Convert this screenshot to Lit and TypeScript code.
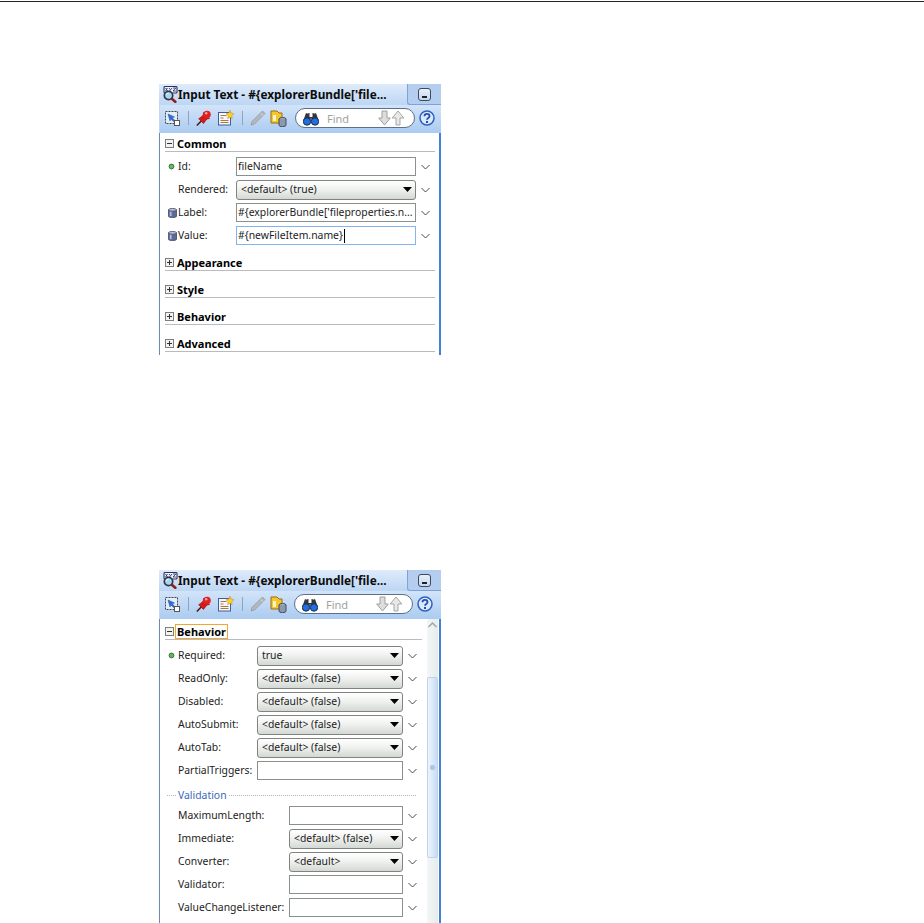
import { LitElement, html, css, svg } from "lit";
import { customElement, property } from "lit/decorators.js";

type Row = {
  label: string;
  kind: "input" | "select" | "focus";
  value?: string;
  marker?: "dot" | "db";
};

const iconTitle = svg`<svg class="i-title" width="16" height="17" viewBox="0 0 16 17">
  <rect x="2" y="0.500" width="13" height="6.500" rx="1" fill="#eef2fb" stroke="#2c3268" stroke-width="1.100"/>
  <path d="M3.500 2l2 3M5.500 2l-2 3M7 2l1.200 1.500M10 2L7.500 5M11 2h2.800l-2.800 3h2.800" stroke="#2c3268" fill="none" stroke-width=".9"/>
  <circle cx="6.500" cy="9.500" r="4.200" fill="#a6d6f0" stroke="#2e3a4c" stroke-width="1.700"/>
  <path d="M4.300 8.800a2.500 2.500 0 0 1 2.500-1.700" stroke="#fff" fill="none"/>
  <path d="M9.800 12.800l3.500 3" stroke="#8a2018" stroke-width="2.600" stroke-linecap="round"/>
</svg>`;
const iconSelect = svg`<svg width="16" height="16" viewBox="0 0 16 16">
  <rect x="1.500" y="1.500" width="12" height="12" fill="#e4ecf6" stroke="#3d4450" stroke-dasharray="2 1"/>
  <path d="M4 4l6.500 3-2.300.800 2.500 2.500-1.200 1.200-2.500-2.500L6 11z" fill="#2f6fd8" stroke="#1c4aa0" stroke-width=".5"/>
  <rect x="10.500" y="10.500" width="5" height="5" fill="#fff" stroke="#555"/>
</svg>`;
const iconPin = svg`<svg width="16" height="16" viewBox="0 0 16 16">
  <path d="M.800 15.500l5.200-5.200" stroke="#4a2018" stroke-width="1.600"/>
  <path d="M7.500 2.500l6 6-2.500.500-2.500 3-1 1.500-4.800-4.800 1.500-1 3-2.500z" fill="#d61818" stroke="#9a1010" stroke-width=".7"/>
  <circle cx="11" cy="4.500" r="3.800" fill="#e42020"/>
  <circle cx="10.200" cy="3.300" r="1.200" fill="#f8a8a8"/>
</svg>`;
const iconNote = svg`<svg width="16" height="16" viewBox="0 0 16 16">
  <rect x="0.500" y="2.500" width="12" height="12.500" fill="#f4f6fb" stroke="#3c5fa0"/>
  <path d="M2.500 5.500h6M2.500 8h3M2.500 10.500h8M2.500 12.500h8" stroke="#b07a30"/>
  <path d="M12 0l1 3 3 .700-2.300 2 .500 3L12 7.200 9.600 8.700l.600-3L8 3.700l3-.700z" fill="#f8d030" stroke="#c98a10" stroke-width=".5"/>
</svg>`;
const iconPencil = svg`<svg width="16" height="16" viewBox="0 0 16 16">
  <path d="M12.500 1l2.500 2.500L4.500 14 1 15l1-3.500z" fill="#b4b8bc" stroke="#93979b" stroke-width=".8"/>
  <path d="M11 3.500l2 2" stroke="#e4e6e8"/>
</svg>`;
const iconDoc = svg`<svg width="17" height="17" viewBox="0 0 17 17">
  <path d="M1 1h6l2 2h3v10H1z" fill="#f6c62a" stroke="#9a6d10"/>
  <rect x="3" y="5" width="3" height="6" fill="#fff6c8"/>
  <ellipse cx="12.500" cy="9" rx="3.500" ry="1.500" fill="#aab6c8" stroke="#3f4c60"/>
  <path d="M9 9v6c0 1 1.500 1.600 3.500 1.600s3.500-.600 3.500-1.600V9" fill="#8b99ae" stroke="#3f4c60"/>
</svg>`;
const iconBino = svg`<svg width="16" height="15" viewBox="0 0 16 15">
  <path d="M3 2h3.500v4H9.500V2H13l2.500 7h-7V7.500h-1V9H.500z" fill="#33363c"/>
  <circle cx="4" cy="10.500" r="3.700" fill="#1f6fe0" stroke="#1a2c50"/>
  <circle cx="12" cy="10.500" r="3.700" fill="#1f6fe0" stroke="#1a2c50"/>
  <path d="M3.500 2.500h2M10.500 2.500h2" stroke="#9aa0a8"/>
</svg>`;
const iconDown = svg`<svg width="13" height="16" viewBox="0 0 13 16"><path d="M4 1h5v7h3.300L6.500 15 .700 8H4z" fill="#dcdedc" stroke="#9da09d"/></svg>`;
const iconUp = svg`<svg width="14" height="16" viewBox="0 0 14 16"><path d="M5 15h4V8h3.800L7 1 1.200 8H5z" fill="#e8eae8" stroke="#a4a7a4"/></svg>`;
const iconHelp = svg`<svg width="16" height="16" viewBox="0 0 16 16">
  <circle cx="8" cy="8" r="7" fill="#dbe9fb" stroke="#2d62c0" stroke-width="1.500"/>
  <path d="M5.500 6.200c0-3 5-3 5 0 0 1.800-2.500 1.800-2.500 3.600" fill="none" stroke="#1f4fb0" stroke-width="1.800"/>
  <rect x="7" y="11" width="2" height="2" fill="#1f4fb0"/>
</svg>`;
const iconDot = svg`<svg width="7" height="7" viewBox="0 0 7 7"><circle cx="3.500" cy="3.500" r="2.400" fill="#5cc04c" stroke="#3f6a48"/></svg>`;
const iconDb = svg`<svg width="9" height="10" viewBox="0 0 10 11">
  <path d="M.500 2v7c0 1 2 1.500 4.500 1.500S9.500 10 9.500 9V2z" fill="#5d6a96" stroke="#49506e"/>
  <ellipse cx="5" cy="2" rx="4.500" ry="1.500" fill="#c0c8de" stroke="#49506e"/>
  <rect x="2" y="4" width="2" height="5" fill="#b4bcd6"/>
</svg>`;
const iconChevron = svg`<svg width="9" height="6" viewBox="0 0 9 6"><path d="M.500 1l4 4 4-4" fill="none" stroke="#444c4c"/></svg>`;
const iconCaret = svg`<svg width="9" height="5" viewBox="0 0 9 5"><path d="M0 0h9L4.500 5z" fill="#000"/></svg>`;

@customElement("prop-row")
class PropRow extends LitElement {
  @property({ type: Object }) row!: Row;
  static styles = css`
    :host { display: flex; align-items: center; height: 23px; padding-left: 6px; }
    .marker { width: 12px; flex: none; display: flex; align-items: center; padding-left: 2px; box-sizing: border-box; }
    .label { flex: none; width: var(--label-w); white-space: nowrap; }
    .ctl {
      flex: none; width: var(--ctl-w); height: 19px; box-sizing: border-box;
      border: 1px solid #8a918a; background: #fff; display: flex; align-items: center;
      padding: 0 1px; white-space: nowrap; overflow: hidden;
    }
    .select {
      height: 20px; border-radius: 3px; border-color: #7f847f; padding: 0 3px 0 4px;
      background: linear-gradient(#ffffff, #f0f2f0 45%, #d4d8d4);
      justify-content: space-between;
    }
    .focus { border-color: #84b4ee; }
    .cursor { display: inline-block; width: 1px; height: 14px; background: #000; margin-left: 1px; }
    .chev { flex: none; width: 19px; display: flex; justify-content: center; }
  `;
  render() {
    const { label, kind, value = "", marker } = this.row;
    return html`
      <span class="marker">${marker === "dot" ? iconDot : marker === "db" ? iconDb : ""}</span>
      <span class="label">${label}</span>
      <div class="ctl ${kind}">
        <span>${value}</span>
        ${kind === "select" ? iconCaret : ""}
        ${kind === "focus" ? html`<i class="cursor"></i>` : ""}
      </div>
      <span class="chev">${iconChevron}</span>
    `;
  }
}

@customElement("sec-head")
class SecHead extends LitElement {
  @property() label = "";
  @property({ type: Boolean }) open = false;
  @property({ type: Boolean }) focused = false;
  static styles = css`
    :host {
      display: flex; align-items: center; gap: 2px; height: 19px; box-sizing: border-box;
      border-bottom: 1px solid #b8bcc0; margin: 0 var(--head-right, 4px) 0 5px;
      font-weight: 700; font-size: 11px; color: #000; padding-top: 3px;
    }
    svg { flex: none; }
    .t { padding: 0 1px; line-height: 13px; }
    .t.f { outline: 1px solid #f0a830; outline-offset: 0; }
  `;
  render() {
    return html`<svg width="9" height="9" viewBox="0 0 9 9">
        <rect x=".5" y=".5" width="8" height="8" fill="#f2f2f0" stroke="#7b7f7f"/>
        <path d=${this.open ? "M2 4.500h5" : "M2 4.500h5M4.500 2v5"} stroke="#333"/>
      </svg><span class="t ${this.focused ? "f" : ""}">${this.label}</span>`;
  }
}

const chrome = html`
  <div class="title">
    <div class="tname">${iconTitle}<span>Input Text - #{explorerBundle['file...</span></div>
    <div class="tab"><span class="min"></span></div>
  </div>
  <div class="bar">
    ${iconSelect}<i class="sep"></i>${iconPin}${iconNote}<i class="sep s2"></i>${iconPencil}${iconDoc}
    <div class="pill">${iconBino}<span class="find">Find</span><span class="arrows">${iconDown}${iconUp}</span></div>
    ${iconHelp}
  </div>`;

const common: Row[] = [
  { label: "Id:", kind: "input", value: "fileName", marker: "dot" },
  { label: "Rendered:", kind: "select", value: "<default> (true)" },
  { label: "Label:", kind: "input", value: "#{explorerBundle['fileproperties.n...", marker: "db" },
  { label: "Value:", kind: "focus", value: "#{newFileItem.name}", marker: "db" },
];
const behavior: Row[] = [
  { label: "Required:", kind: "select", value: "true", marker: "dot" },
  { label: "ReadOnly:", kind: "select", value: "<default> (false)" },
  { label: "Disabled:", kind: "select", value: "<default> (false)" },
  { label: "AutoSubmit:", kind: "select", value: "<default> (false)" },
  { label: "AutoTab:", kind: "select", value: "<default> (false)" },
  { label: "PartialTriggers:", kind: "input" },
];
const validation: Row[] = [
  { label: "MaximumLength:", kind: "input" },
  { label: "Immediate:", kind: "select", value: "<default> (false)" },
  { label: "Converter:", kind: "select", value: "<default>" },
  { label: "Validator:", kind: "input" },
  { label: "ValueChangeListener:", kind: "input" },
];

@customElement("app-root")
export class AppRoot extends LitElement {
  static styles = css`
    :host {
      display: block; height: 923px; overflow: hidden; background: #fff;
      font: 10.4px/13px "Noto Sans", "Liberation Sans", sans-serif; color: #1c1c1c;
    }
    .rule { height: 1px; background: #222; margin-top: 1px; }
    .panel {
      width: 282px; margin-left: 159px; box-sizing: border-box; overflow: hidden;
      display: flex; flex-direction: column; background: #bcd6f4;
    }
    .p1 { height: 271px; margin-top: 82px; }
    .p2 { height: 353px; margin-top: 215px; }
    .title { display: flex; height: 21px; flex: none; }
    .tname {
      flex: 1; display: flex; align-items: center; padding: 0 0 0 3px;
      font-weight: 700; font-size: 11.8px; color: #0c0c0c; white-space: nowrap;
      background: linear-gradient(#dfebfa, #bcd6f4);
    }
    .tab {
      width: 34px; box-sizing: border-box; flex: none; display: flex; justify-content: center; padding-top: 4px;
      background: #b5cdee; border-left: 1px solid #7ba4dc; border-bottom: 1px solid #7ba4dc; border-bottom-left-radius: 3px;
    }
    .min {
      width: 13px; height: 13px; box-sizing: border-box; border: 1px solid #3c4a5c; border-radius: 3px;
      background: linear-gradient(#e8f0fa, #c4d8f2); display: flex; align-items: flex-end; justify-content: center;
      padding-bottom: 2px;
    }
    .min::after { content: ""; width: 5px; height: 2px; background: #222; }
    .bar {
      height: 28px; flex: none; display: flex; align-items: center; padding: 0 0 2px 4px; box-sizing: border-box;
      background: linear-gradient(#d2e4f9, #abcbf0); border-left: 1px solid #c2d8f2;
    }
    .sep { width: 1px; height: 14px; background: #8ea4bc; margin: 0 7px 0 8px; }
    .bar svg { flex: none; }
    .bar > svg:nth-of-type(3) { margin-left: 6px; }
    .bar > svg:nth-of-type(5) { margin-left: 4px; }
    .pill {
      margin-left: 8px; width: 120px; height: 20px; box-sizing: border-box; flex: none;
      display: flex; align-items: center; padding: 0 9px 0 7px;
      background: #fff; border: 1px solid #5e6f86; border-radius: 10px;
    }
    .p2 .pill { margin-left: 7px; width: 119px; }
    .find { margin-left: 8px; color: #9ea39e; font-size: 11px; }
    .arrows { margin-left: auto; display: flex; }
    .pill + svg { margin-left: 4px; }
    .body {
      flex: 1; display: flex; min-height: 0; background: #fff;
      border-left: 1px solid #6c8ab2; border-right: 2px solid #3f82d6;
    }
    .main { flex: 1; min-width: 0; }
    .p2 .main { padding-top: 2px; --head-right: 5px; }
    .rows { padding-top: 3px; --label-w: 58px; --ctl-w: 180px; }
    .p2 .rows { padding-top: 4px; --label-w: 79px; --ctl-w: 146px; }
    .p2 .rows.deep { padding-top: 0; --label-w: 111px; --ctl-w: 114px; }
    sec-head.after { margin-top: 5px; }
    sec-head.next { margin-top: 8px; }
    .vhead {
      display: flex; align-items: center; height: 22px; padding: 4px 0 0 7px; box-sizing: border-box;
      margin-right: 11px; color: #3a68b8;
    }
    .vhead i { border-top: 1px dotted #b4b8b4; height: 0; }
    .vhead i:first-child { width: 9px; margin-right: 2px; }
    .vhead i:last-child { flex: 1; margin-left: 2px; }
    .scroll {
      width: 11px; flex: none; background: linear-gradient(90deg, #f2f6f6, #e6ecec);
      display: flex; flex-direction: column; align-items: center; margin-right: 1px;
    }
    .scroll svg { flex: none; margin-top: 3px; }
    .thumb {
      margin-top: 49px; height: 181px; width: 11px; box-sizing: border-box; flex: none;
      border: 1px solid #bdd3ea; border-radius: 2px; background: linear-gradient(90deg, #eef5fc, #c8dcf4);
      display: flex; align-items: center; justify-content: center;
    }
    .thumb::after { content: ""; width: 5px; height: 5px; border-radius: 2px; background: #a8c8ea; }
  `;
  render() {
    const rows = (list: Row[]) => list.map((r) => html`<prop-row .row=${r}></prop-row>`);
    return html`
      <div class="rule"></div>
      <section class="panel p1">
        ${chrome}
        <div class="body">
          <div class="main">
            <sec-head open label="Common"></sec-head>
            <div class="rows">${rows(common)}</div>
            <sec-head class="after" label="Appearance"></sec-head>
            <sec-head class="next" label="Style"></sec-head>
            <sec-head class="next" label="Behavior"></sec-head>
            <sec-head class="next" label="Advanced"></sec-head>
          </div>
        </div>
      </section>
      <section class="panel p2">
        ${chrome}
        <div class="body">
          <div class="main">
            <sec-head open focused label="Behavior"></sec-head>
            <div class="rows">${rows(behavior)}</div>
            <div class="vhead"><i></i><span>Validation</span><i></i></div>
            <div class="rows deep">${rows(validation)}</div>
          </div>
          <div class="scroll">
            <svg width="9" height="6" viewBox="0 0 9 6"><path d="M.500 5l4-4 4 4" fill="none" stroke="#a0a6aa" stroke-width="1.500"/></svg>
            <div class="thumb"></div>
          </div>
        </div>
      </section>
    `;
  }
}
